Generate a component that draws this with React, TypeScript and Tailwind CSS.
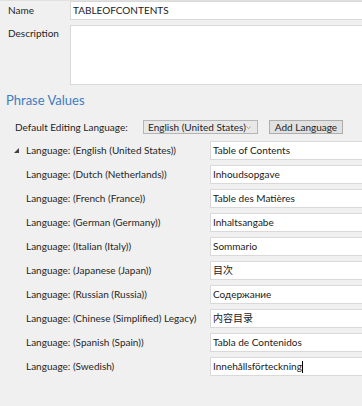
import React from "react";

const rows = [
  { label: "Language: (English (United States))", value: "Table of Contents", expanded: true },
  { label: "Language: (Dutch (Netherlands))", value: "Inhoudsopgave" },
  { label: "Language: (French (France))", value: "Table des Matières" },
  { label: "Language: (German (Germany))", value: "Inhaltsangabe" },
  { label: "Language: (Italian (Italy))", value: "Sommario" },
  { label: "Language: (Japanese (Japan))", value: "目次" },
  { label: "Language: (Russian (Russia))", value: "Содержание" },
  { label: "Language: (Chinese (Simplified) Legacy)", value: "内容目录" },
  { label: "Language: (Spanish (Spain))", value: "Tabla de Contenidos" },
  { label: "Language: (Swedish)", value: "Innehållsförteckning", caret: true },
];

const font = { fontFamily: 'Lato, "Noto Sans CJK SC", sans-serif' };

function Field({ children, caret }: { children?: React.ReactNode; caret?: boolean }) {
  return (
    <div className="flex-1 -mr-[4px] h-[19px] bg-white border border-[#d9d9d9] flex items-center pl-[2px] text-[10px] text-[#1a1a1a] overflow-hidden">
      {children}
      {caret && <span className="w-px h-[12px] bg-black" />}
    </div>
  );
}

export default function App() {
  return (
    <div className="w-[362px] h-[406px] overflow-hidden bg-[#f0f0f0] border-t border-[#e0e0e0] text-[#1e1e1e] whitespace-nowrap" style={font}>
      <div className="flex items-center pl-[8px]">
        <span className="w-[62px] text-[10px]">Name</span>
        <Field>TABLEOFCONTENTS</Field>
      </div>
      <div className="flex pl-[8px] mt-[5px]">
        <span className="w-[62px] text-[10px] leading-[16px]">Description</span>
        <div className="flex-1 -mr-[4px] h-[60px] bg-white border border-[#d9d9d9]" />
      </div>

      <h2 className="pl-[6px] mt-[6px] text-[13px] leading-[18px] text-[#3f7cc1]">Phrase Values</h2>

      <div className="flex items-center mt-[11px] pl-[15px] text-[10px] leading-[14px]">
        <span className="w-[128px]">Default Editing Language:</span>
        <div className="w-[115px] h-[14px] border border-[#b5b5b5] bg-[#e8e8e8] flex items-center justify-between pl-[4px] pr-[3px]">
          <span>English (United States)</span>
          <svg width="7" height="5" viewBox="0 0 7 5" className="mr-[3px]">
            <path d="M0.5 1 L3.5 4 L6.5 1" fill="none" stroke="#8a8a8a" strokeWidth="1" />
          </svg>
        </div>
        <div className="ml-[11px] w-[74px] h-[14px] border border-[#adadad] bg-[#e1e1e1] flex items-center justify-center">
          Add Language
        </div>
      </div>

      <div className="flex flex-col gap-[5px] mt-[7px]">
        {rows.map((r) => (
          <div key={r.label} className="flex items-center h-[19px]">
            <span className="w-[26px] flex justify-end pr-[7px]">
              {r.expanded && (
                <svg width="5" height="5" viewBox="0 0 5 5">
                  <path d="M5 0 L5 5 L0 5 Z" fill="#404040" />
                </svg>
              )}
            </span>
            <span className="w-[184px] text-[10px] text-[#262626]">{r.label}</span>
            <Field caret={r.caret}>{r.value}</Field>
          </div>
        ))}
      </div>
    </div>
  );
}
